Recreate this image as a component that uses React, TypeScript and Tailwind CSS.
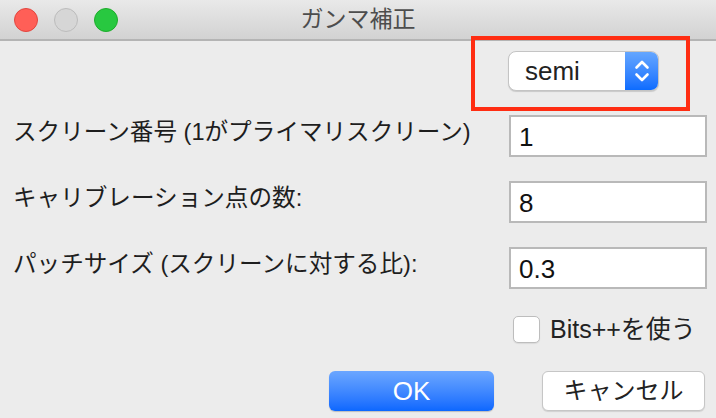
const font = { fontFamily: '"Liberation Sans", "Noto Sans CJK JP", sans-serif' };

function Field({ label, value }: { label: string; value: string }) {
  return (
    <div className="grid grid-cols-[1fr_198px] items-center">
      <span className="-mt-[6px] text-[23.6px] leading-none text-[#1e1e1e]">{label}</span>
      <div className="flex h-[42px] items-center border-2 border-[#b9b9b9] bg-white px-[8px] pt-[2px] text-[26px] text-[#111]">
        {value}
      </div>
    </div>
  );
}

export default function App() {
  return (
    <div
      className="relative h-[418px] w-[716px] overflow-hidden bg-[#ececec]"
      style={font}
    >
      {/* title bar */}
      <div className="relative flex h-[41px] items-center border-b-2 border-[#b4b4b4] bg-gradient-to-b from-[#e9e9e9] to-[#d2d2d2] px-[14px]">
        <div className="flex gap-[16px]">
          <span className="size-[24px] rounded-full border border-[#e2463f] bg-[#ff5f57]" />
          <span className="size-[24px] rounded-full border border-[#bcbcbc] bg-[#d6d6d6]" />
          <span className="size-[24px] rounded-full border border-[#1dad2b] bg-[#28c840]" />
        </div>
        <div className="absolute inset-0 flex items-center justify-center text-[23px] text-[#4d4d4d]">
          ガンマ補正
        </div>
      </div>

      {/* annotation box */}
      <div className="absolute left-[471px] top-[36px] h-[75px] w-[219px] border-[4px] border-[#ff2d12]" />

      <div className="flex flex-col pl-[13px] pr-[9px]">
        <div className="mt-[10px] flex justify-end pr-[48px]">
          <div className="flex h-[40px] w-[151px] overflow-hidden rounded-[8px] border border-[#c4c4c4] bg-white shadow-[0_1px_1px_rgba(0,0,0,0.15)]">
            <span className="flex flex-1 items-center pl-[16px] text-[26px] text-[#222]">semi</span>
            <span className="flex w-[33px] items-center justify-center bg-gradient-to-b from-[#64a6ff] to-[#0b6cff]">
              <svg width="16" height="26" viewBox="0 0 16 26" fill="none" stroke="white" strokeWidth="2.6" strokeLinecap="round" strokeLinejoin="round">
                <path d="M2.5 9.5 8 4l5.5 5.5" />
                <path d="M2.5 16.5 8 22l5.5-5.5" />
              </svg>
            </span>
          </div>
        </div>

        <div className="mt-[24px] flex flex-col gap-[24px]">
          <Field label="スクリーン番号 (1がプライマリスクリーン)" value="1" />
          <Field label="キャリブレーション点の数:" value="8" />
          <Field label="パッチサイズ (スクリーンに対する比):" value="0.3" />
        </div>

        <div className="mt-[27px] grid grid-cols-[1fr_198px]">
          <span />
          <label className="ml-[4px] flex items-center gap-[10px] text-[25px] leading-none text-[#222]">
            <span className="size-[27px] rounded-[5px] border border-[#bdbdbd] bg-white shadow-[0_1px_1px_rgba(0,0,0,0.08)]" />
            Bits++を使う
          </label>
        </div>

        <div className="mt-[28px] flex justify-end gap-[48px] pr-[2px]">
          <button
            type="button"
            className="h-[40px] w-[165px] rounded-[6px] bg-gradient-to-b from-[#6ba6ff] to-[#0a67ff] text-[26px] text-white shadow-[0_1px_1px_rgba(0,0,0,0.2)]"
          >
            OK
          </button>
          <button
            type="button"
            className="h-[40px] w-[163px] rounded-[6px] border border-[#c6c6c6] bg-white text-[24px] text-[#222] shadow-[0_1px_1px_rgba(0,0,0,0.12)]"
          >
            キャンセル
          </button>
        </div>
      </div>
    </div>
  );
}
